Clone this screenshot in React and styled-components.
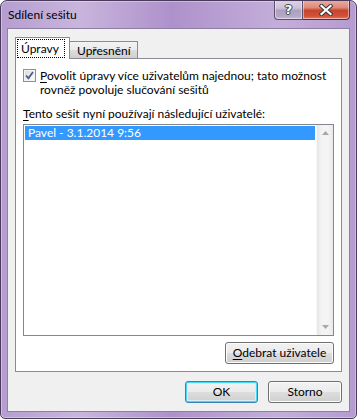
import React from "react";
import styled, { createGlobalStyle } from "styled-components";

const Global = createGlobalStyle`
  html, body { margin: 0; padding: 0; background: #ffffff; }
  body { font-family: "Lato", "Noto Sans", sans-serif; font-size: 12px; color: #000; }
  * { box-sizing: border-box; }
`;

const Window = styled.div`
  width: 357px;
  height: 419px;
  border: 1px solid #4a3b5c;
  border-radius: 7px 7px 5px 5px;
  background: linear-gradient(90deg, #b69dd0 0%, #c8b5dc 22%, #ae91cb 48%, #c3aed9 78%, #b59bd0 100%);
  box-shadow: inset 0 0 0 1px rgba(255,255,255,0.35);
  display: flex;
  flex-direction: column;
  padding: 0 6px 6px 6px;
  overflow: hidden;
`;

const TitleBar = styled.div`
  height: 27px;
  display: flex;
  align-items: flex-start;
  justify-content: space-between;
  padding-left: 1px;
`;

const Title = styled.div`
  margin-top: 6px;
  font-size: 12px;
  line-height: 16px;
  color: #000;
  white-space: nowrap;
`;

const CaptionButtons = styled.div`
  display: flex;
  margin-top: -1px;
`;

const CapButton = styled.div`
  width: ${p => p.$w}px;
  height: 20px;
  border: 1px solid ${p => (p.$close ? "#6c2a22" : "#5d506c")};
  border-top: none;
  border-left-width: ${p => (p.$close ? 0 : 1)}px;
  border-radius: ${p => (p.$close ? "0 0 4px 0" : "0 0 0 4px")};
  background: ${p =>
    p.$close
      ? "linear-gradient(180deg, #eab0a4 0%, #de8a78 40%, #c9442f 55%, #d0523a 85%, #e27c62 100%)"
      : "linear-gradient(180deg, #ded4e6 0%, #cdc2d9 42%, #aea1bf 55%, #b4a8c4 85%, #c7bcd4 100%)"};
  box-shadow: inset 0 0 0 1px rgba(255,255,255,0.45);
  display: flex;
  align-items: center;
  justify-content: center;
`;

const QMark = styled.span`
  font-family: "DejaVu Sans", sans-serif;
  font-weight: bold;
  font-size: 13px;
  line-height: 13px;
  color: #fff;
  text-shadow: 0 0 1px #333, 0 0 1px #333, 1px 0 0 #555, -1px 0 0 #555, 0 1px 0 #555, 0 -1px 0 #555;
`;

const Client = styled.div`
  flex: 1;
  border: 1px solid #8e7fa3;
  background: #f0f0f0;
  display: flex;
  flex-direction: column;
  padding: 8px 7px 8px 7px;
`;

const TabStrip = styled.div`
  display: flex;
  align-items: flex-end;
  margin-bottom: -1px;
  position: relative;
  z-index: 1;
  height: 22px;
`;

const Tab = styled.div`
  border: 1px solid #898c95;
  border-bottom: none;
  border-left-width: ${p => (p.$active ? 1 : 0)}px;
  height: ${p => (p.$active ? 22 : 17)}px;
  margin-bottom: ${p => (p.$active ? 0 : 1)}px;
  background: ${p => (p.$active ? "#ffffff" : "linear-gradient(180deg, #f3f3f3 0%, #ebebeb 50%, #dddddd 51%, #cfcfcf 100%)")};
  padding: ${p => (p.$active ? "2px 2px 0 2px" : "0 5px 0 7px")};
  width: ${p => (p.$active ? 55 : 68)}px;
  display: flex;
  align-items: ${p => (p.$active ? "flex-start" : "center")};
  line-height: 15px;
  white-space: nowrap;
`;

const Focus = styled.span`
  outline: 1px dotted #000;
  outline-offset: 0;
  padding: 1px 5px 1px 3px;
  line-height: 15px;
`;

const Panel = styled.div`
  flex: 1;
  background: #ffffff;
  border: 1px solid #898c95;
  display: flex;
  flex-direction: column;
  padding: 10px 6px 7px 7px;
`;

const CheckRow = styled.div`
  display: flex;
  align-items: flex-start;
  gap: 4px;
`;

const CheckBox = styled.div`
  width: 13px;
  height: 13px;
  flex: 0 0 13px;
  border: 1px solid #8e8f8f;
  background: linear-gradient(135deg, #d8d8d8 0%, #f0f0f0 60%, #ffffff 100%);
  box-shadow: inset 0 0 0 1px #f4f4f4;
  display: flex;
  align-items: center;
  justify-content: center;
`;

const Text = styled.div`
  line-height: 14px;
  font-size: 12px;
  white-space: nowrap;
`;

const U = styled.span`
  text-decoration: underline;
  text-underline-offset: 2px;
`;

const ListLabel = styled(Text)`
  margin-top: 10px;
  margin-bottom: 3px;
`;

const ListBox = styled.div`
  flex: 1;
  border: 1px solid #828790;
  background: #ffffff;
  display: flex;
  padding: 1px 0 1px 1px;
  margin-right: 1px;
`;

const Items = styled.div`
  flex: 1;
`;

const Item = styled.div`
  height: 14px;
  line-height: 14px;
  padding-left: 3px;
  background: ${p => (p.$selected ? "#3399ff" : "transparent")};
  color: ${p => (p.$selected ? "#ffffff" : "#000")};
  margin-right: 1px;
  white-space: nowrap;
`;

const ScrollBar = styled.div`
  width: 17px;
  margin: -1px 0;
  background: linear-gradient(90deg, #e6e6e6 0%, #f4f4f4 30%, #f4f4f4 70%, #e9e9e9 100%);
  border-left: 1px solid #f8f8f8;
  display: flex;
  flex-direction: column;
  justify-content: space-between;
  align-items: center;
  padding: 6px 0 6px 0;
`;

const ButtonRow = styled.div`
  display: flex;
  justify-content: flex-end;
  gap: ${p => p.$gap || 0}px;
  margin-top: ${p => p.$mt}px;
  padding-right: ${p => p.$pr || 0}px;
`;

const Button = styled.div`
  width: ${p => p.$w}px;
  height: 22px;
  border: 1px solid ${p => (p.$default ? "#3c7fb1" : "#707070")};
  border-radius: 3px;
  background: linear-gradient(180deg, #f2f2f2 0%, #ebebeb 48%, #dddddd 52%, #cfcfcf 100%);
  box-shadow: ${p => (p.$default ? "inset 0 0 0 1px #48d8fb, inset 0 0 0 2px #d2f0fa" : "inset 0 0 0 1px #fcfcfc")};
  display: flex;
  align-items: center;
  justify-content: center;
  line-height: 14px;
  padding-bottom: 1px;
  white-space: nowrap;
`;

function Check() {
  return (
    <svg width="9" height="9" viewBox="0 0 9 9">
      <path d="M1 4.5 L3.4 7.2 L8 1" fill="none" stroke="#4a5f8e" strokeWidth="1.8" strokeLinejoin="miter" />
    </svg>
  );
}

function CloseGlyph() {
  return (
    <svg width="14" height="12" viewBox="0 0 14 12">
      <path d="M2.5 2 L11.5 10 M11.5 2 L2.5 10" stroke="#3a3a3a" strokeWidth="4.2" strokeLinecap="square" />
      <path d="M2.5 2 L11.5 10 M11.5 2 L2.5 10" stroke="#ffffff" strokeWidth="2.2" strokeLinecap="square" />
    </svg>
  );
}

function Arrow({ up }) {
  return (
    <svg width="7" height="4" viewBox="0 0 7 4">
      <path d={up ? "M0 4 L3.5 0 L7 4 Z" : "M0 0 L7 0 L3.5 4 Z"} fill="#a7a7a7" />
    </svg>
  );
}

export default function App() {
  return (
    <>
      <Global />
      <Window>
        <TitleBar>
          <Title>Sdílení sešitu</Title>
          <CaptionButtons>
            <CapButton $w={29}>
              <QMark>?</QMark>
            </CapButton>
            <CapButton $w={47} $close>
              <CloseGlyph />
            </CapButton>
          </CaptionButtons>
        </TitleBar>
        <Client>
          <TabStrip>
            <Tab $active>
              <Focus>Úpravy</Focus>
            </Tab>
            <Tab>Upřesnění</Tab>
          </TabStrip>
          <Panel>
            <CheckRow>
              <CheckBox>
                <Check />
              </CheckBox>
              <Text>
                <U>P</U>ovolit úpravy více uživatelům najednou; tato možnost
                <br />
                rovněž povoluje slučování sešitů
              </Text>
            </CheckRow>
            <ListLabel>
              <U>T</U>ento sešit nyní používají následující uživatelé:
            </ListLabel>
            <ListBox>
              <Items>
                <Item $selected>Pavel - 3.1.2014 9:56</Item>
              </Items>
              <ScrollBar>
                <Arrow up />
                <Arrow />
              </ScrollBar>
            </ListBox>
            <ButtonRow $mt={6} $pr={1}>
              <Button $w={109}>
                <span>
                  <U>O</U>debrat uživatele
                </span>
              </Button>
            </ButtonRow>
          </Panel>
          <ButtonRow $mt={9} $gap={10}>
            <Button $w={73} $default>OK</Button>
            <Button $w={74}>Storno</Button>
          </ButtonRow>
        </Client>
      </Window>
    </>
  );
}
